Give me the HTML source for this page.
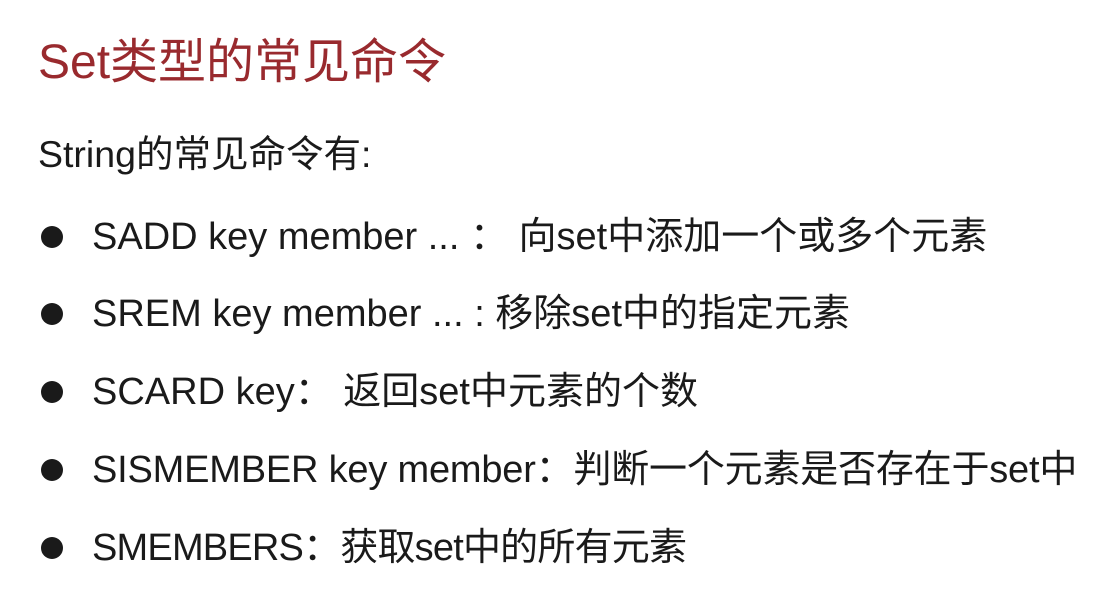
<!DOCTYPE html>
<html><head><meta charset="utf-8"><style>
body{margin:0;width:1116px;height:604px;background:#fff;overflow:hidden;position:relative;font-family:"Liberation Sans","Noto Sans CJK SC",sans-serif;color:#1a1a1a}
.t{position:absolute;left:38px;top:39px;font-size:48px;color:#992a2e;white-space:pre;line-height:1}
.s{position:absolute;left:38px;top:136px;font-size:37.5px;white-space:pre;line-height:1}
.l{position:absolute;left:92px;font-size:38px;white-space:pre;line-height:1}
.b{position:absolute;left:41px;width:22px;height:22px;border-radius:50%;background:#1a1a1a}
</style></head><body>
<div class="t">Set类型的常见命令</div>
<div class="s">String的常见命令有:</div>
<div class="b" style="top:226px"></div><div class="l" style="top:218px">SADD key member ... ： 向set中添加一个或多个元素</div>
<div class="b" style="top:303px"></div><div class="l" style="top:295px">SREM key member ... : 移除set中的指定元素</div>
<div class="b" style="top:381px"></div><div class="l" style="top:373px">SCARD key： 返回set中元素的个数</div>
<div class="b" style="top:459px"></div><div class="l" style="top:451px;letter-spacing:-0.2px">SISMEMBER key member：判断一个元素是否存在于set中</div>
<div class="b" style="top:537px"></div><div class="l" style="top:529px;letter-spacing:-0.8px">SMEMBERS：获取set中的所有元素</div>
</body></html>
